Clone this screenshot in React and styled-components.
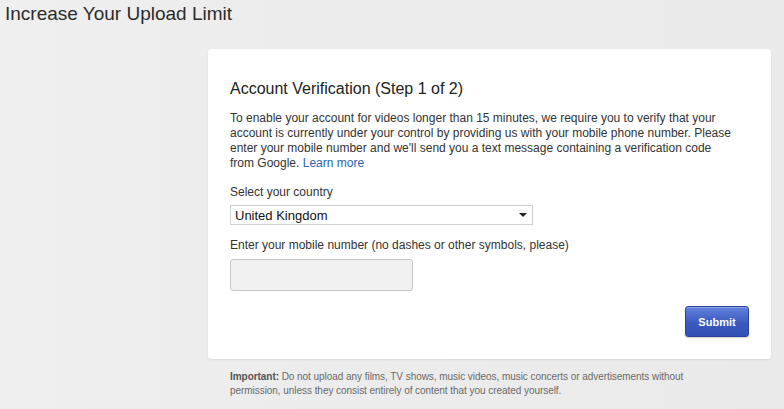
import React from 'react';
import styled, { createGlobalStyle } from 'styled-components';

const GlobalStyle = createGlobalStyle`
  html, body {
    margin: 0;
    padding: 0;
    background: #ececec;
    font-family: "Liberation Sans", Arial, sans-serif;
  }
`;

const Page = styled.div`
  min-height: 409px;
  padding: 0 5px;
  background: linear-gradient(90deg, #efefef 0%, #ececec 40%, #eaeaea 100%);
  box-sizing: border-box;
`;

const Heading = styled.h1`
  margin: 0;
  font-size: 19px;
  font-weight: normal;
  line-height: 28px;
  color: #2b2b2b;
`;

const Main = styled.div`
  width: 563px;
  margin: 21px 0 0 203px;
`;

const Card = styled.div`
  background: #fff;
  border-radius: 3px;
  box-shadow: 0 1px 2px rgba(0, 0, 0, 0.08);
  padding: 30px 22px 22px;
  display: flex;
  flex-direction: column;
`;

const Title = styled.h2`
  margin: 0 0 12px;
  font-size: 16px;
  font-weight: normal;
  line-height: 20px;
  color: #222;
`;

const Body = styled.p`
  margin: 0;
  font-size: 12px;
  line-height: 15px;
  color: #333;
  max-width: 505px;
`;

const Link = styled.a`
  color: #2a64b4;
  text-decoration: none;
`;

const Label = styled.label`
  display: block;
  margin-top: ${p => p.$gap}px;
  font-size: 12px;
  line-height: 15px;
  color: #333;
`;

const SelectBox = styled.div`
  margin-top: 5px;
  width: 303px;
  height: 20px;
  box-sizing: border-box;
  border: 1px solid #cfcfcf;
  display: flex;
  align-items: center;
  justify-content: space-between;
  padding: 0 5px 0 4px;
  font-size: 13px;
  color: #111;
`;

const Caret = styled.span`
  width: 0;
  height: 0;
  border-left: 4px solid transparent;
  border-right: 4px solid transparent;
  border-top: 4px solid #222;
`;

const Input = styled.input`
  margin-top: 6px;
  width: 183px;
  height: 32px;
  box-sizing: border-box;
  border: 1px solid #c6c6c6;
  border-radius: 3px;
  background: #f1f1f1;
  outline: none;
`;

const Actions = styled.div`
  display: flex;
  justify-content: flex-end;
  margin-top: 15px;
`;

const Button = styled.button`
  width: 64px;
  height: 31px;
  border: 1px solid #2b4596;
  border-radius: 3px;
  background: linear-gradient(#6482dc, #3a5ac0 55%, #3150b2);
  color: #fff;
  font-family: "Liberation Sans", Arial, sans-serif;
  font-size: 11px;
  font-weight: bold;
  box-shadow: inset 0 1px 0 rgba(255, 255, 255, 0.25), 0 1px 1px rgba(0, 0, 0, 0.2);
  cursor: pointer;
`;

const Note = styled.p`
  margin: 11px 0 0;
  padding: 0 22px;
  font-size: 10px;
  letter-spacing: -0.05px;
  line-height: 14px;
  color: #6a6a6a;
  b {
    color: #555;
  }
`;

export default function App() {
  return (
    <>
      <GlobalStyle />
      <Page>
        <Heading>Increase Your Upload Limit</Heading>
        <Main>
          <Card>
            <Title>Account Verification (Step 1 of 2)</Title>
            <Body>
              To enable your account for videos longer than 15 minutes, we require you to verify that your
              account is currently under your control by providing us with your mobile phone number. Please
              enter your mobile number and we'll send you a text message containing a verification code
              from Google. <Link href="#">Learn more</Link>
            </Body>
            <Label $gap={14}>Select your country</Label>
            <SelectBox>
              <span>United Kingdom</span>
              <Caret />
            </SelectBox>
            <Label $gap={13}>Enter your mobile number (no dashes or other symbols, please)</Label>
            <Input type="text" />
            <Actions>
              <Button>Submit</Button>
            </Actions>
          </Card>
          <Note>
            <b>Important:</b> Do not upload any films, TV shows, music videos, music concerts or advertisements without
            <br />
            permission, unless they consist entirely of content that you created yourself.
          </Note>
        </Main>
      </Page>
    </>
  );
}
